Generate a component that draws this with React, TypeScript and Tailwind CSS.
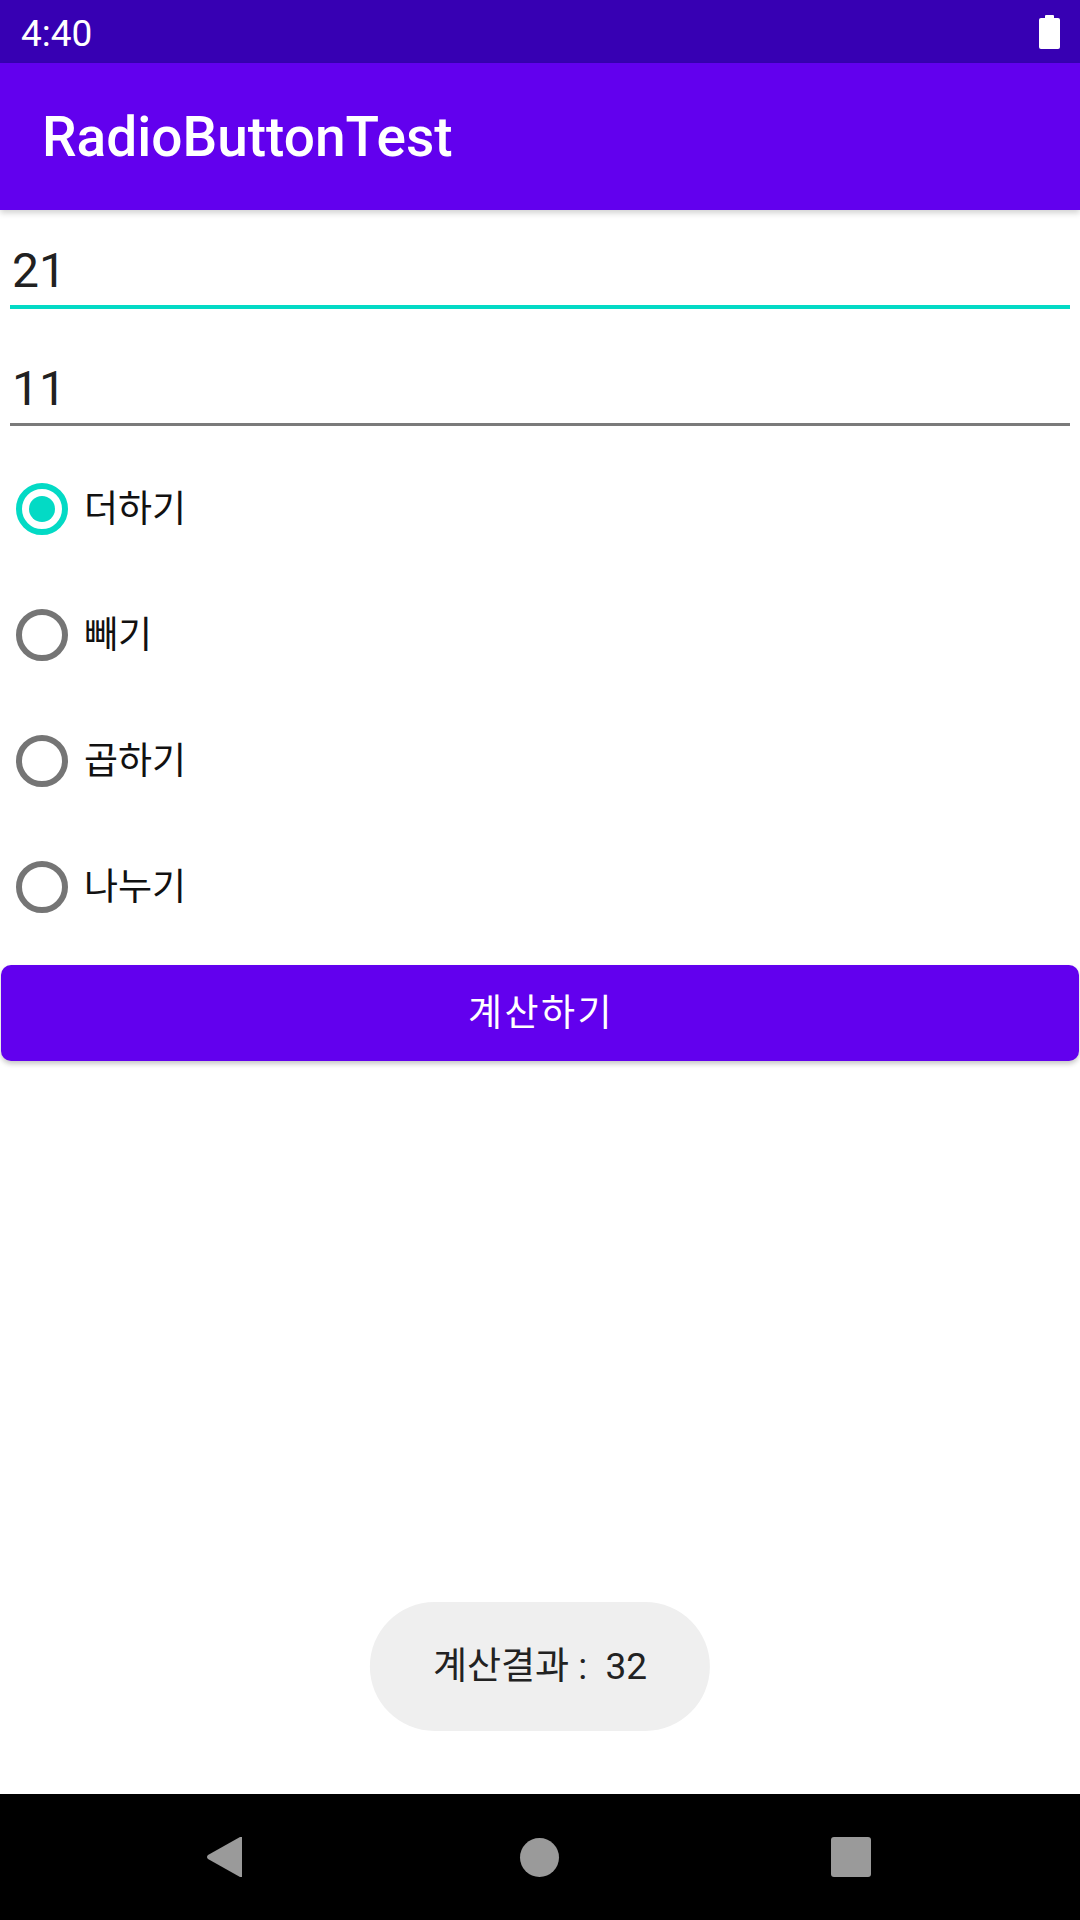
import { useState } from "react";

const options = ["더하기", "빼기", "곱하기", "나누기"];

function BatteryIcon() {
  return (
    <svg width="21" height="34" viewBox="0 0 21 34" fill="#ffffff">
      <rect x="6" y="0" width="9" height="5" rx="1" />
      <rect x="0" y="3" width="21" height="31" rx="2" />
    </svg>
  );
}

function Radio({ checked }: { checked: boolean }) {
  return (
    <div
      className={`flex h-[52px] w-[52px] items-center justify-center rounded-full border-[6px] ${
        checked ? "border-[#03dac5]" : "border-[#757575]"
      }`}
    >
      {checked && <div className="h-[26px] w-[26px] rounded-full bg-[#03dac5]" />}
    </div>
  );
}

export default function App() {
  const [selected, setSelected] = useState(0);

  return (
    <div className="flex h-[1920px] w-[1080px] flex-col overflow-hidden bg-white font-['Roboto','Noto_Sans_CJK_KR',sans-serif] text-[#212121]">
      {/* Status bar */}
      <div className="flex h-[63px] shrink-0 items-center justify-between bg-[#3700b3] pl-[21px] pr-[20px] text-white">
        <span className="pt-[3px] text-[37px] leading-none">4:40</span>
        <BatteryIcon />
      </div>

      {/* Toolbar */}
      <div className="relative z-10 flex h-[147px] shrink-0 items-center bg-[#6200ee] pl-[42px] shadow-[0_3px_6px_rgba(0,0,0,0.18)]">
        <span className="pt-[2px] text-[55px] font-medium leading-none text-white">RadioButtonTest</span>
      </div>

      {/* Content */}
      <div className="relative flex flex-1 flex-col">
        <div className="mx-[10px] mt-[33px]">
          <div className="h-[56px] pl-[2px] text-[48px] leading-[56px]">21</div>
          <div className="mt-[6px] h-[4px] bg-[#03dac5]" />
        </div>
        <div className="mx-[10px] mt-[52px]">
          <div className="h-[56px] pl-[2px] text-[48px] leading-[56px]">11</div>
          <div className="mt-[6px] h-[3px] bg-[#7a7a7a]" />
        </div>

        <div className="mt-[20px] flex flex-col">
          {options.map((label, i) => (
            <div
              key={label}
              className="flex h-[126px] cursor-pointer items-center pl-[16px]"
              onClick={() => setSelected(i)}
            >
              <Radio checked={selected === i} />
              <span className="ml-[16px] text-[37px] leading-none text-[#111]">{label}</span>
            </div>
          ))}
        </div>

        <button className="mx-[1px] mt-[15px] flex h-[96px] items-center justify-center rounded-[10px] bg-[#6200ee] pl-[2px] text-[37px] leading-none tracking-[2.4px] text-white shadow-[0_3px_5px_rgba(0,0,0,0.22)]">
          계산하기
        </button>

        {/* Toast */}
        <div className="absolute bottom-[63px] left-1/2 flex h-[129px] -translate-x-1/2 items-center rounded-full bg-[#efefef] px-[63px]">
          <span className="whitespace-pre text-[37px] leading-none text-[#222]">계산결과 :  32</span>
        </div>
      </div>

      {/* Navigation bar */}
      <div className="flex h-[126px] shrink-0 items-center bg-black pl-[207px]">
        <svg width="36" height="42" viewBox="0 0 36 42" fill="#9a9a9a">
          <path d="M35 1 L35 41 L33 41 L1 23 Q-1 21 1 19 L33 1 Z" />
        </svg>
        <div className="ml-[277px] h-[39px] w-[39px] rounded-full bg-[#9a9a9a]" />
        <div className="ml-[272px] h-[40px] w-[40px] rounded-[3px] bg-[#9a9a9a]" />
      </div>
    </div>
  );
}
